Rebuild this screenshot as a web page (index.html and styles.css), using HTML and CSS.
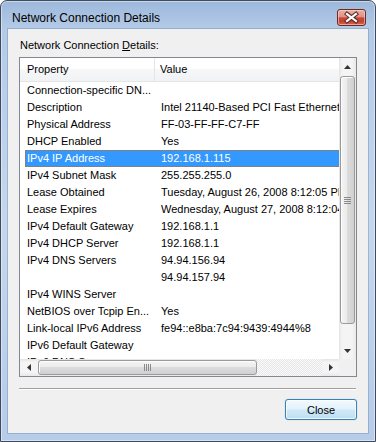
FILE: index.html
```html
<!DOCTYPE html>
<html>
<head>
<meta charset="utf-8">
<link rel="stylesheet" href="styles.css">
</head>
<body>
<div class="window">
  <div class="titlebar">
    <div class="title">Network Connection Details</div>
    <div class="caption-close">
      <svg width="27" height="15" viewBox="0 0 27 15">
        <path d="M9 4 L18 11 M18 4 L9 11" stroke="#5e2a2a" stroke-width="4.2" stroke-linecap="square" fill="none"/>
        <path d="M9 4 L18 11 M18 4 L9 11" stroke="#ffffff" stroke-width="2.2" stroke-linecap="square" fill="none"/>
      </svg>
    </div>
  </div>
  <div class="client">
    <div class="label">Network Connection <u>D</u>etails:</div>
    <div class="list">
      <div class="list-content">
        <div class="header">
          <div class="hcell hprop">Property</div>
          <div class="hcell hval">Value</div>
        </div>
        <div class="rows">
          <div class="row"><div class="c1">Connection-specific DN...</div><div class="c2"></div></div>
          <div class="row"><div class="c1">Description</div><div class="c2">Intel 21140-Based PCI Fast Ethernet Adapter (Emulated)</div></div>
          <div class="row"><div class="c1">Physical Address</div><div class="c2">FF-03-FF-FF-C7-FF</div></div>
          <div class="row"><div class="c1">DHCP Enabled</div><div class="c2">Yes</div></div>
          <div class="row sel"><div class="c1">IPv4 IP Address</div><div class="c2">192.168.1.115</div></div>
          <div class="row"><div class="c1">IPv4 Subnet Mask</div><div class="c2">255.255.255.0</div></div>
          <div class="row"><div class="c1">Lease Obtained</div><div class="c2">Tuesday, August 26, 2008 8:12:05 PM</div></div>
          <div class="row"><div class="c1">Lease Expires</div><div class="c2">Wednesday, August 27, 2008 8:12:04 PM</div></div>
          <div class="row"><div class="c1">IPv4 Default Gateway</div><div class="c2">192.168.1.1</div></div>
          <div class="row"><div class="c1">IPv4 DHCP Server</div><div class="c2">192.168.1.1</div></div>
          <div class="row"><div class="c1">IPv4 DNS Servers</div><div class="c2">94.94.156.94</div></div>
          <div class="row"><div class="c1"></div><div class="c2">94.94.157.94</div></div>
          <div class="row"><div class="c1">IPv4 WINS Server</div><div class="c2"></div></div>
          <div class="row"><div class="c1">NetBIOS over Tcpip En...</div><div class="c2">Yes</div></div>
          <div class="row"><div class="c1">Link-local IPv6 Address</div><div class="c2">fe94::e8ba:7c94:9439:4944%8</div></div>
          <div class="row"><div class="c1">IPv6 Default Gateway</div><div class="c2"></div></div>
          <div class="row"><div class="c1">IPv6 DNS Servers</div><div class="c2"></div></div>
        </div>
      </div>
      <div class="vscroll">
        <div class="sbtn"><svg width="7" height="4" viewBox="0 0 7 4"><polygon points="3.5,0 7,4 0,4" fill="#333"/></svg></div>
        <div class="vtrack">
          <div class="vthumb">
            <svg width="7" height="7" viewBox="0 0 7 7"><path d="M0 0.5H7M0 2.5H7M0 4.5H7M0 6.5H7" stroke="#8a8a8a" stroke-width="1"/></svg>
          </div>
        </div>
        <div class="sbtn"><svg width="7" height="4" viewBox="0 0 7 4"><polygon points="0,0 7,0 3.5,4" fill="#333"/></svg></div>
      </div>
      <div class="hscroll">
        <div class="sbtn hbtn"><svg width="4" height="7" viewBox="0 0 4 7"><polygon points="4,0 4,7 0,3.5" fill="#333"/></svg></div>
        <div class="hthumb">
          <svg width="7" height="7" viewBox="0 0 7 7"><path d="M0.5 0V7M2.5 0V7M4.5 0V7M6.5 0V7" stroke="#8a8a8a" stroke-width="1"/></svg>
        </div>
        <div class="htrack-rest"></div>
        <div class="sbtn hbtn"><svg width="4" height="7" viewBox="0 0 4 7"><polygon points="0,0 4,3.5 0,7" fill="#333"/></svg></div>
      </div>
      <div class="corner"></div>
    </div>
    <div class="sep"></div>
    <div class="footer"><button class="btn">Close</button></div>
  </div>
</div>
</body>
</html>
```
FILE: styles.css
```css
html, body {
  margin: 0;
  padding: 0;
  background: #ffffff;
  overflow: hidden;
}

.window {
  width: 376px;
  height: 442px;
  box-sizing: border-box;
  border: 1px solid #3f4b5c;
  border-radius: 7px 7px 0 0;
  background: linear-gradient(to bottom, #9db8db 0, #b4cbe8 28px, #c4d7ee 50%, #b6cce8 100%);
  box-shadow: inset 0 0 0 1px rgba(255, 255, 255, 0.45);
  padding: 0 7px 8px 7px;
  display: flex;
  flex-direction: column;
  font-family: "Liberation Sans", Arial, sans-serif;
  color: #000;
}

.titlebar {
  height: 28px;
  flex: none;
  display: flex;
  align-items: flex-start;
}

.title {
  margin-left: 4px;
  padding-top: 9px;
  font-size: 12px;
  line-height: 16px;
  flex: 1;
}

.caption-close {
  margin-top: 8px;
  margin-right: 2px;
  width: 29px;
  height: 17px;
  box-sizing: border-box;
  border: 1px solid #6b2b26;
  border-radius: 3px;
  background: linear-gradient(to bottom, #eab0a4 0%, #df9282 45%, #c84b3b 52%, #c3402f 75%, #d66a52 100%);
  box-shadow: inset 0 0 0 1px rgba(255, 220, 210, 0.55);
  display: flex;
  align-items: center;
  justify-content: center;
}

.client {
  flex: 1;
  background: #f0f0f0;
  box-shadow: 0 0 0 1px rgba(90, 120, 160, 0.35);
  display: flex;
  flex-direction: column;
  font-size: 11px;
}

.label {
  margin: 9px 0 0 12px;
  line-height: 15px;
}

.list {
  margin: 4px 0 0 11px;
  width: 338px;
  height: 320px;
  box-sizing: border-box;
  border: 1px solid #828790;
  background: #fff;
  display: grid;
  grid-template-columns: 319px 17px;
  grid-template-rows: 301px 17px;
}

.list-content {
  overflow: hidden;
  position: relative;
}

.header {
  height: 24px;
  box-sizing: border-box;
  display: flex;
  background: linear-gradient(to bottom, #ffffff 0, #ffffff 45%, #f6f7f8 50%, #f1f2f4 100%);
  border-bottom: 1px solid #e5e5e5;
}

.hcell {
  line-height: 23px;
  white-space: nowrap;
}

.hprop {
  width: 135px;
  padding-left: 7px;
  box-sizing: border-box;
  border-right: 1px solid #e3e5e8;
}

.hval {
  padding-left: 5px;
}

.row {
  display: flex;
  height: 17px;
  line-height: 17px;
  margin-left: 5px;
  width: 420px;
  white-space: nowrap;
}

.c1 {
  width: 130px;
  flex: none;
  padding-left: 2px;
  box-sizing: border-box;
  overflow: hidden;
}

.c2 {
  flex: 1;
  padding-left: 6px;
}

.row.sel {
  background: #3399ff;
  color: #fff;
  outline: 1px dotted #cc6a10;
  outline-offset: -1px;
}

.vscroll {
  display: flex;
  flex-direction: column;
  background: linear-gradient(to right, #e4e4e4 0, #f4f4f4 3px, #f4f4f4 13px, #e8e8e8 17px);
}

.sbtn {
  height: 17px;
  flex: none;
  display: flex;
  align-items: center;
  justify-content: center;
}

.vtrack {
  flex: 1;
  display: flex;
  flex-direction: column;
  padding-top: 1px;
}

.vthumb {
  height: 248px;
  margin: 0 1px;
  box-sizing: border-box;
  border: 1px solid #9a9a9a;
  border-radius: 3px;
  background: linear-gradient(to right, #f4f4f4 0, #ececec 45%, #dcdcdc 50%, #d0d0d0 100%);
  box-shadow: inset 1px 1px 0 #fdfdfd;
  display: flex;
  align-items: center;
  justify-content: center;
}

.hscroll {
  display: flex;
  background: linear-gradient(to bottom, #e4e4e4 0, #f4f4f4 3px, #f4f4f4 13px, #e8e8e8 17px);
}

.hbtn {
  width: 17px;
  height: 17px;
}

.hthumb {
  width: 219px;
  margin: 1px 0 1px 1px;
  box-sizing: border-box;
  border: 1px solid #9a9a9a;
  border-radius: 3px;
  background: linear-gradient(to bottom, #f4f4f4 0, #ececec 45%, #dcdcdc 50%, #d0d0d0 100%);
  box-shadow: inset 1px 1px 0 #fdfdfd;
  display: flex;
  align-items: center;
  justify-content: center;
}

.htrack-rest {
  flex: 1;
  background: repeating-conic-gradient(#e6e6e6 0 25%, #fafafa 0 50%) 0 0 / 2px 2px;
}

.corner {
  background: #f0f0f0;
}

.sep {
  margin: 11px 0 0 11px;
  width: 337px;
  height: 0;
  border-top: 1px solid #a0a0a0;
  border-bottom: 1px solid #ffffff;
}

.footer {
  display: flex;
  justify-content: flex-end;
  padding-right: 11px;
  margin-top: 9px;
}

.btn {
  width: 72px;
  height: 21px;
  box-sizing: border-box;
  border: 1px solid #3c7fb1;
  border-radius: 3px;
  background: linear-gradient(to bottom, #f2f9fd 0, #e3f2fb 48%, #cfe8f7 52%, #bfdff2 100%);
  box-shadow: inset 0 0 0 1px rgba(255, 255, 255, 0.7), 0 0 1px #6cc0ef;
  font-family: "Liberation Sans", Arial, sans-serif;
  font-size: 11px;
  color: #000;
  padding: 0;
  margin: 0;
}
```
